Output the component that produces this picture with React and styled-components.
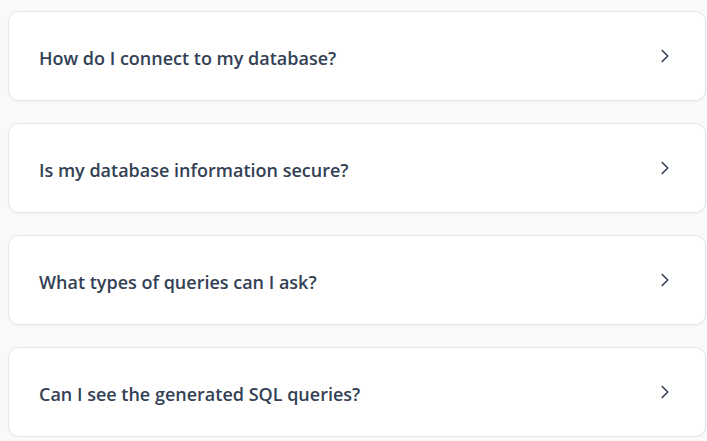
import React from "react";
import styled, { createGlobalStyle } from "styled-components";
import { ChevronRight } from "lucide-react";

const GlobalStyle = createGlobalStyle`
    body {
        margin: 0;
        background: #f8f9fb;
        font-family: "Open Sans", "Noto Sans", Arial, sans-serif;
    }
`;

const questions = [
    "How do I connect to my database?",
    "Is my database information secure?",
    "What types of queries can I ask?",
    "Can I see the generated SQL queries?",
];

const App = () => {
    return (
        <>
            <GlobalStyle />
            <List>
                {questions.map((q) => (
                    <Card key={q}>
                        <Question>{q}</Question>
                        <Toggle>
                            <ChevronRight size={22} strokeWidth={1.75} />
                        </Toggle>
                    </Card>
                ))}
            </List>
        </>
    );
};

const List = styled.div`
    display: flex;
    flex-direction: column;
    gap: 22px;
    padding: 11px 1px 0 8px;
`;

const Card = styled.div`
    height: 90px;
    box-sizing: border-box;
    background: #fff;
    border: 1px solid #e5e7eb;
    border-radius: 11px;
    box-shadow: 0 1px 2px rgba(0, 0, 0, 0.04);
    display: flex;
    align-items: center;
    justify-content: space-between;
    padding: 0 29px 0 30px;
`;

const Question = styled.h3`
    margin: 0;
    padding-top: 3px;
    font-size: 18px;
    font-weight: 600;
    color: #334155;
`;

const Toggle = styled.span`
    display: flex;
    align-items: center;
    justify-content: center;
    color: #334155;
`;

export default App;
